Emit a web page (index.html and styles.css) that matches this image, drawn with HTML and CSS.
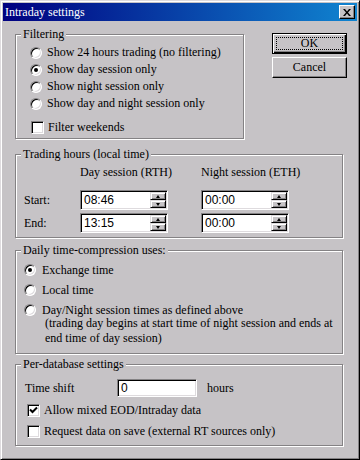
FILE: index.html
```html
<!DOCTYPE html>
<html>
<head>
    <title>Intraday settings</title>
    <link rel="stylesheet" href="styles.css">
</head>
<body>
    <div class="window">
        <div class="titlebar">
            <span class="title">Intraday settings</span>
            <div class="close-btn">
                <svg width="8" height="7" viewBox="0 0 8 7"><path d="M0 0h2l2 2.5L6 0h2L5 3.5 8 7H6L4 4.5 2 7H0l3-3.5z" fill="#000"/></svg>
            </div>
        </div>

        <div class="client">
            <div class="top-row">
                <div class="group filtering">
                    <span class="legend">Filtering</span>
                    <div class="opt-row"><span class="radio"></span>Show 24 hours trading (no filtering)</div>
                    <div class="opt-row"><span class="radio checked"></span>Show day session only</div>
                    <div class="opt-row"><span class="radio"></span>Show night session only</div>
                    <div class="opt-row"><span class="radio"></span>Show day and night session only</div>
                    <div class="opt-row check-row"><span class="checkbox"></span>Filter weekends</div>
                </div>
                <div class="buttons">
                    <div class="btn default"><span class="focus">OK</span></div>
                    <div class="btn">Cancel</div>
                </div>
            </div>

            <div class="group trading">
                <span class="legend">Trading hours (local time)</span>
                <div class="hours-grid">
                    <span></span>
                    <span class="col-head">Day session (RTH)</span>
                    <span class="col-head">Night session (ETH)</span>

                    <span>Start:</span>
                    <div class="spin-field"><span class="field-text">08:46</span><div class="spinner"><span class="up"></span><span class="down"></span></div></div>
                    <div class="spin-field"><span class="field-text">00:00</span><div class="spinner"><span class="up"></span><span class="down"></span></div></div>

                    <span>End:</span>
                    <div class="spin-field"><span class="field-text">13:15</span><div class="spinner"><span class="up"></span><span class="down"></span></div></div>
                    <div class="spin-field"><span class="field-text">00:00</span><div class="spinner"><span class="up"></span><span class="down"></span></div></div>
                </div>
            </div>

            <div class="group daily">
                <span class="legend">Daily time-compression uses:</span>
                <div class="opt-row wide"><span class="radio checked"></span>Exchange time</div>
                <div class="opt-row wide"><span class="radio"></span>Local time</div>
                <div class="opt-row wide"><span class="radio"></span>Day/Night session times as defined above</div>
                <div class="note">(trading day begins at start time of night session and ends at<br>end time of day session)</div>
            </div>

            <div class="group perdb">
                <span class="legend">Per-database settings</span>
                <div class="shift-row">
                    <span class="shift-label">Time shift</span>
                    <div class="text-field"><span class="field-text">0</span></div>
                    <span class="unit">hours</span>
                </div>
                <div class="opt-row tall"><span class="checkbox checked">
                    <svg width="9" height="9" viewBox="0 0 9 9"><path d="M1 3.5l2.5 2.5L8 1.5" fill="none" stroke="#000" stroke-width="2"/></svg>
                </span>Allow mixed EOD/Intraday data</div>
                <div class="opt-row tall"><span class="checkbox"></span>Request data on save (external RT sources only)</div>
            </div>
        </div>
    </div>
</body>
</html>
```

FILE: styles.css
```css
body {
    margin: 0;
    font-family: "Liberation Serif", serif;
    font-size: 12px;
    color: #000;
    background: #c6c3c6;
}
.window {
    width: 360px;
    height: 460px;
    box-sizing: border-box;
    padding: 2px;
    background: #c6c3c6;
    border: 1px solid;
    border-color: #dedbde #000 #000 #dedbde;
    box-shadow: inset 1px 1px 0 #fff, inset -1px -1px 0 #848284;
}
.titlebar {
    height: 18px;
    display: flex;
    align-items: center;
    justify-content: space-between;
    background: linear-gradient(to right, #000080, #1084d0);
    color: #fff;
    padding-left: 2px;
    padding-right: 2px;
}
.close-btn {
    width: 16px;
    height: 14px;
    box-sizing: border-box;
    display: flex;
    align-items: center;
    justify-content: center;
    background: #c6c3c6;
    border: 1px solid;
    border-color: #fff #000 #000 #fff;
    box-shadow: inset -1px -1px 0 #848284;
}
.client {
    padding: 13px 0 0 12px;
}
.top-row {
    display: flex;
    align-items: flex-start;
}
.group {
    position: relative;
    box-sizing: border-box;
    border: 1px solid #848284;
    box-shadow: 1px 1px 0 #fff, inset 1px 1px 0 #fff;
}
.legend {
    position: absolute;
    top: -8px;
    left: 5px;
    padding: 0 2px;
    line-height: 15px;
    background: #c6c3c6;
}
.filtering {
    width: 229px;
    height: 105px;
    padding: 9px 0 0 14px;
}
.opt-row {
    display: flex;
    align-items: center;
    height: 17px;
    white-space: nowrap;
}
.check-row {
    margin-top: 7px;
    margin-left: 1px;
}
.radio {
    width: 12px;
    height: 12px;
    box-sizing: border-box;
    margin-right: 5px;
    border-radius: 50%;
    border: 1px solid;
    border-color: #848284 #fff #fff #848284;
    background: #fff;
    box-shadow: inset 1px 1px 0 #000, inset -1px -1px 0 #dedbde;
    display: flex;
    align-items: center;
    justify-content: center;
}
.radio.checked::after {
    content: "";
    width: 4px;
    height: 4px;
    border-radius: 50%;
    background: #000;
}
.checkbox {
    width: 13px;
    height: 13px;
    box-sizing: border-box;
    margin-right: 4px;
    border: 1px solid;
    border-color: #848284 #fff #fff #848284;
    background: #fff;
    box-shadow: inset 1px 1px 0 #000, inset -1px -1px 0 #dedbde;
    display: flex;
    align-items: center;
    justify-content: center;
}
.checkbox svg {
    display: block;
}
.buttons {
    margin-left: 28px;
    margin-top: -1px;
    display: flex;
    flex-direction: column;
    gap: 3px;
}
.btn {
    width: 75px;
    height: 21px;
    box-sizing: border-box;
    display: flex;
    align-items: center;
    justify-content: center;
    border: 1px solid;
    border-color: #fff #000 #000 #fff;
    box-shadow: inset -1px -1px 0 #848284;
}
.btn.default {
    border: 1px solid #000;
    box-shadow: inset 1px 1px 0 #fff, inset -1px -1px 0 #000, inset -2px -2px 0 #848284;
    padding: 3px;
}
.btn .focus {
    flex: 1;
    align-self: stretch;
    display: flex;
    align-items: center;
    justify-content: center;
    outline: 1px dotted #000;
    outline-offset: -1px;
}
.trading {
    width: 328px;
    height: 84px;
    margin-top: 15px;
    padding: 10px 0 0 8px;
}
.hours-grid {
    display: grid;
    grid-template-columns: 56px 121px 88px;
    grid-template-rows: 22px 20px 20px;
    row-gap: 3px;
    align-items: center;
}
.col-head {
    align-self: start;
    white-space: nowrap;
}
.spin-field, .text-field {
    display: flex;
    box-sizing: border-box;
    height: 20px;
    background: #fff;
    border: 1px solid;
    border-color: #848284 #fff #fff #848284;
    box-shadow: inset 1px 1px 0 #000, inset -1px -1px 0 #dedbde;
    padding: 1px;
}
.spin-field {
    width: 88px;
}
.field-text {
    flex: 1;
    display: flex;
    align-items: center;
    padding-left: 2px;
    font-family: "Liberation Sans", sans-serif;
    font-size: 12px;
}
.spinner {
    width: 16px;
    display: flex;
    flex-direction: column;
}
.spinner span {
    flex: 1;
    box-sizing: border-box;
    background: #c6c3c6;
    border: 1px solid;
    border-color: #dedbde #000 #000 #dedbde;
    box-shadow: inset 1px 1px 0 #fff, inset -1px -1px 0 #848284;
    display: flex;
    align-items: center;
    justify-content: center;
}
.spinner .up::after, .spinner .down::after {
    content: "";
    border-left: 2.5px solid transparent;
    border-right: 2.5px solid transparent;
}
.spinner .up::after {
    border-bottom: 3px solid #000;
}
.spinner .down::after {
    border-top: 3px solid #000;
}
.daily {
    width: 328px;
    height: 104px;
    margin-top: 12px;
    padding: 9px 0 0 8px;
}
.opt-row.wide {
    height: 20px;
}
.daily .radio {
    margin-right: 6px;
}
.note {
    margin-top: -4px;
    margin-left: 21px;
    line-height: 15px;
    white-space: nowrap;
}
.perdb {
    width: 328px;
    height: 82px;
    margin-top: 10px;
    padding: 14px 0 0 9px;
}
.shift-row {
    display: flex;
    align-items: center;
    height: 18px;
}
.shift-label {
    width: 92px;
}
.text-field {
    width: 80px;
    height: 18px;
}
.unit {
    margin-left: 10px;
}
.opt-row.tall {
    height: 21px;
    margin-left: 2px;
}
.perdb .shift-row + .opt-row {
    margin-top: 3px;
}
```
